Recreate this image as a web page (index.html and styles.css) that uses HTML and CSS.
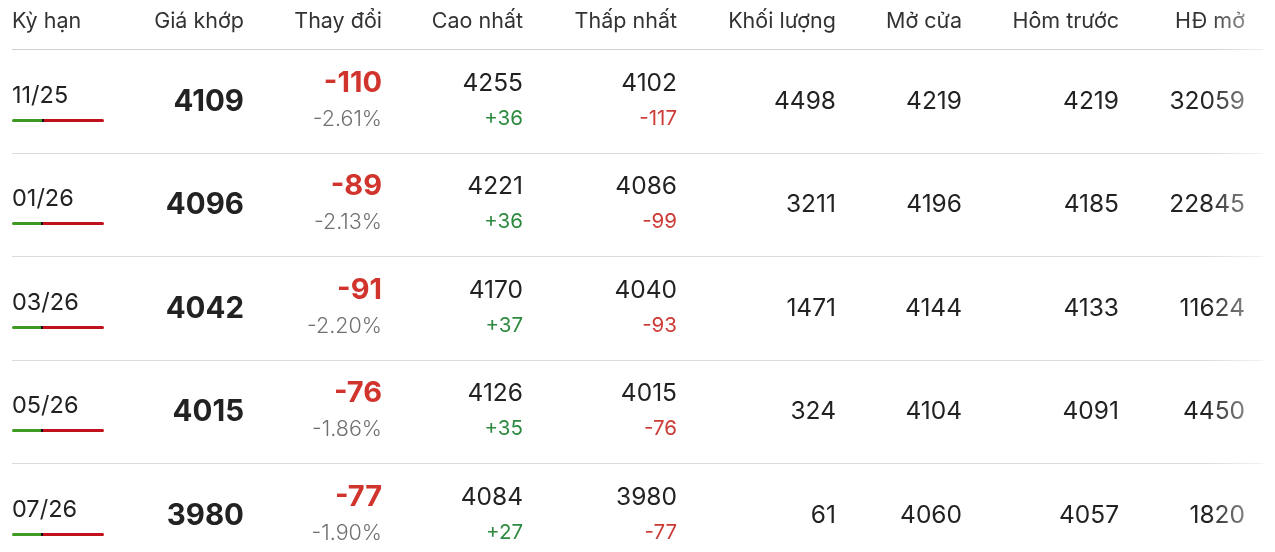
FILE: index.html
```html
<!DOCTYPE html>
<html lang="vi">
<head>
<meta charset="utf-8">
<title>Giá cà phê kỳ hạn</title>
<link rel="stylesheet" href="styles.css">
</head>
<body>
<div class="table">
  <div class="row head">
    <div class="c left">Kỳ hạn</div>
    <div class="c">Giá khớp</div>
    <div class="c">Thay đổi</div>
    <div class="c">Cao nhất</div>
    <div class="c">Thấp nhất</div>
    <div class="c">Khối lượng</div>
    <div class="c">Mở cửa</div>
    <div class="c">Hôm trước</div>
    <div class="c">HĐ mở</div>
  </div>

  <div class="row">
    <div class="c left term"><span class="tname">11/25</span><span class="bar"><span class="up" style="width:30px"></span><span class="mark"></span><span class="down"></span></span></div>
    <div class="c price">4109</div>
    <div class="c stack"><span class="chg">-110</span><span class="pct">-2.61%</span></div>
    <div class="c stack"><span class="val">4255</span><span class="sub pos">+36</span></div>
    <div class="c stack"><span class="val">4102</span><span class="sub neg">-117</span></div>
    <div class="c num">4498</div>
    <div class="c num">4219</div>
    <div class="c num">4219</div>
    <div class="c num">32059</div>
  </div>

  <div class="row">
    <div class="c left term"><span class="tname">01/26</span><span class="bar"><span class="up" style="width:29px"></span><span class="mark"></span><span class="down"></span></span></div>
    <div class="c price">4096</div>
    <div class="c stack"><span class="chg">-89</span><span class="pct">-2.13%</span></div>
    <div class="c stack"><span class="val">4221</span><span class="sub pos">+36</span></div>
    <div class="c stack"><span class="val">4086</span><span class="sub neg">-99</span></div>
    <div class="c num">3211</div>
    <div class="c num">4196</div>
    <div class="c num">4185</div>
    <div class="c num">22845</div>
  </div>

  <div class="row">
    <div class="c left term"><span class="tname">03/26</span><span class="bar"><span class="up" style="width:29px"></span><span class="mark"></span><span class="down"></span></span></div>
    <div class="c price">4042</div>
    <div class="c stack"><span class="chg">-91</span><span class="pct">-2.20%</span></div>
    <div class="c stack"><span class="val">4170</span><span class="sub pos">+37</span></div>
    <div class="c stack"><span class="val">4040</span><span class="sub neg">-93</span></div>
    <div class="c num">1471</div>
    <div class="c num">4144</div>
    <div class="c num">4133</div>
    <div class="c num">11624</div>
  </div>

  <div class="row">
    <div class="c left term"><span class="tname">05/26</span><span class="bar"><span class="up" style="width:29px"></span><span class="mark"></span><span class="down"></span></span></div>
    <div class="c price">4015</div>
    <div class="c stack"><span class="chg">-76</span><span class="pct">-1.86%</span></div>
    <div class="c stack"><span class="val">4126</span><span class="sub pos">+35</span></div>
    <div class="c stack"><span class="val">4015</span><span class="sub neg">-76</span></div>
    <div class="c num">324</div>
    <div class="c num">4104</div>
    <div class="c num">4091</div>
    <div class="c num">4450</div>
  </div>

  <div class="row">
    <div class="c left term"><span class="tname">07/26</span><span class="bar"><span class="up" style="width:29px"></span><span class="mark"></span><span class="down"></span></span></div>
    <div class="c price">3980</div>
    <div class="c stack"><span class="chg">-77</span><span class="pct">-1.90%</span></div>
    <div class="c stack"><span class="val">4084</span><span class="sub pos">+27</span></div>
    <div class="c stack"><span class="val">3980</span><span class="sub neg">-77</span></div>
    <div class="c num">61</div>
    <div class="c num">4060</div>
    <div class="c num">4057</div>
    <div class="c num">1820</div>
  </div>
</div>
</body>
</html>
```

FILE: styles.css
```css
html, body {
  margin: 0;
  padding: 0;
  background: #ffffff;
}

body {
  font-family: Inter, "Noto Sans", sans-serif;
  color: #222222;
  overflow: hidden;
}

.table {
  margin-left: 12px;
  width: 1251px;
  -webkit-mask-image: linear-gradient(to right, #000 1195px, rgba(0,0,0,0.35) 1251px);
  mask-image: linear-gradient(to right, #000 1195px, rgba(0,0,0,0.35) 1251px);
}

.row {
  display: grid;
  grid-template-columns: 138px 94px 138px 141px 154px 159px 126px 157px 126px;
  padding-right: 18px;
  box-sizing: border-box;
  height: 103.5px;
  border-bottom: 1px solid #dcdcdc;
  align-items: center;
}

.row.head {
  height: 50px;
  align-items: start;
  padding-top: 7px;
  border-bottom-color: #cfcfcf;
}

.c {
  text-align: right;
  display: flex;
  flex-direction: column;
  align-items: flex-end;
  justify-content: center;
}

.c.left {
  text-align: left;
  align-items: flex-start;
}

.head .c {
  font-size: 21.5px;
  color: #333333;
  line-height: 26px;
}

.tname {
  font-size: 23.5px;
  line-height: 28px;
  color: #222222;
}

.bar {
  display: flex;
  width: 92px;
  height: 3px;
  margin-top: 10px;
  border-radius: 2px;
  overflow: hidden;
}

.bar .up {
  background: #3e9a22;
  height: 100%;
}

.bar .mark {
  width: 2px;
  background: #111111;
  height: 100%;
}

.bar .down {
  flex: 1;
  background: #c1121b;
  height: 100%;
}

.price {
  font-size: 29.5px;
  font-weight: 700;
  color: #222222;
  padding-bottom: 3px;
}

.stack {
  padding-bottom: 5px;
}

.chg {
  font-size: 29px;
  font-weight: 700;
  color: #d0342c;
  line-height: 30px;
}

.pct {
  font-size: 21.5px;
  font-weight: 300;
  color: #707070;
  line-height: 26px;
  margin-top: 8px;
}

.val {
  font-size: 24.5px;
  line-height: 30px;
  color: #222222;
}

.sub {
  font-size: 20.5px;
  line-height: 26px;
  margin-top: 8px;
}

.sub.pos { color: #2e8a40; }
.sub.neg { color: #cc3b36; }

.num {
  font-size: 24.5px;
  color: #222222;
  padding-bottom: 3px;
}
```
